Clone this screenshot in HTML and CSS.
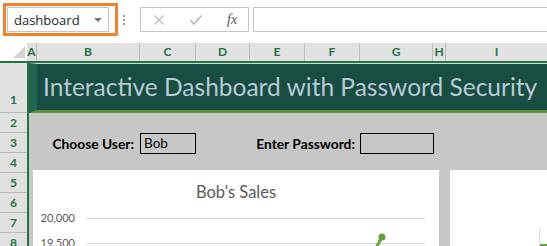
FILE: index.html
```html
<!doctype html>
<html lang="en">
<head>
  <meta charset="UTF-8">
  <title>dashboard</title>
  <link rel="stylesheet" href="styles.css">
</head>
<body>
  <div class="ribbon">
    <div class="namebox">
      <div class="namefield">
        <span>dashboard</span>
        <span class="drop"></span>
      </div>
    </div>
    <div class="dots"><i></i><i></i><i></i></div>
    <div class="fxbtns">
      <svg class="fxicon" width="12" height="12" viewBox="0 0 12 12">
        <path d="M1.5 1.5 L10.5 10.5 M10.5 1.5 L1.5 10.5" stroke="#bcbcbc" stroke-width="1.3" fill="none"/>
      </svg>
      <svg class="fxicon" width="14" height="12" viewBox="0 0 14 12">
        <path d="M1.5 6.5 L5 10 L12.5 1.5" stroke="#bcbcbc" stroke-width="1.8" fill="none"/>
      </svg>
      <span class="fx">fx</span>
    </div>
    <div class="formula"></div>
  </div>

  <div class="colhdr">
    <div class="corner"><span class="tri"></span></div>
    <div class="col w-a">A</div>
    <div class="col w-b">B</div>
    <div class="col w-c">C</div>
    <div class="col w-d">D</div>
    <div class="col w-e">E</div>
    <div class="col w-f">F</div>
    <div class="col w-g">G</div>
    <div class="col w-h">H</div>
    <div class="col w-i">I</div>
  </div>

  <div class="sheet">
    <div class="rowhdr">
      <div class="row r1">1</div>
      <div class="row">2</div>
      <div class="row">3</div>
      <div class="row">4</div>
      <div class="row">5</div>
      <div class="row">6</div>
      <div class="row">7</div>
      <div class="row">8</div>
    </div>

    <div class="content">
      <div class="band">Interactive Dashboard with Password Security</div>
      <div class="spacer"></div>
      <div class="inputs">
        <div class="lbl lbl-user">Choose User:</div>
        <div class="cellbox">Bob</div>
        <div class="lbl lbl-pass">Enter Password:</div>
        <div class="cellbox pass"></div>
      </div>

      <div class="charts">
        <div class="chart main-chart">
          <div class="chart-title">Bob's Sales</div>
          <svg class="plot" width="406" height="60" viewBox="0 0 406 60">
            <line x1="53" y1="18.5" x2="392" y2="18.5" stroke="#d9d9d9" stroke-width="1"/>
            <line x1="53" y1="43.5" x2="392" y2="43.5" stroke="#d9d9d9" stroke-width="1"/>
            <text x="42" y="22" text-anchor="end" class="axis">20,000</text>
            <text x="42" y="47" text-anchor="end" class="axis">19,500</text>
            <polyline points="349,37 343,48" fill="none" stroke="#62a438" stroke-width="3"/>
            <circle cx="349" cy="37" r="3.6" fill="#62a438"/>
          </svg>
        </div>
        <div class="chart side-chart">
          <svg width="97" height="76" viewBox="0 0 97 76">
            <line x1="89.5" y1="59" x2="89.5" y2="76" stroke="#d9d9d9"/>
            <line x1="90" y1="75" x2="97" y2="75" stroke="#62a438" stroke-width="2"/>
          </svg>
        </div>
      </div>
    </div>
  </div>
</body>
</html>
```
FILE: styles.css
```css
*{
  box-sizing: border-box;
}
body{
  margin: 0;
  width: 547px;
  height: 246px;
  overflow: hidden;
  background: #ffffff;
  font-family: Lato, "Open Sans", sans-serif;
}

/* formula bar */
.ribbon{
  height: 43px;
  display: flex;
  align-items: flex-start;
  padding-top: 3px;
}
.namebox{
  margin-left: 3px;
  width: 115px;
  height: 33px;
  border: 3px solid #f4812a;
  padding: 1px 6px 1px 1px;
}
.namefield{
  height: 25px;
  border: 1px solid #c6c6c6;
  display: flex;
  align-items: center;
  justify-content: space-between;
  padding: 0 6px 0 6px;
  font-family: "Open Sans", sans-serif;
  font-size: 13px;
  color: #262626;
}
.drop{
  width: 0;
  height: 0;
  border-left: 4px solid transparent;
  border-right: 4px solid transparent;
  border-top: 4px solid #777;
  margin-top: 1px;
}
.dots{
  width: 12px;
  height: 33px;
  display: flex;
  flex-direction: column;
  align-items: center;
  justify-content: center;
  gap: 2px;
}
.dots i{
  width: 2px;
  height: 2px;
  background: #9a9a9a;
}
.fxbtns{
  margin-top: 4px;
  margin-left: 10px;
  width: 109px;
  height: 25px;
  border: 1px solid #c6c6c6;
  display: flex;
  align-items: center;
  padding: 0 0 0 12px;
}
.fxicon{
  display: block;
  margin-right: 24px;
}
.fx{
  color: #555;
  font-family: "Liberation Serif", serif;
  font-style: italic;
  font-size: 14px;
}
.formula{
  margin-top: 4px;
  margin-left: 4px;
  flex: 1;
  height: 25px;
  border: 1px solid #c6c6c6;
  border-right: none;
}

/* headers */
.colhdr{
  height: 20px;
  display: flex;
  background: #e1e1e1;
  border-bottom: 2px solid #217346;
}
.corner{
  width: 27px;
  background: #ffffff;
  position: relative;
}
.tri{
  position: absolute;
  right: 2px;
  bottom: 3px;
  width: 0;
  height: 0;
  border-left: 12px solid transparent;
  border-bottom: 12px solid #d3d3d3;
}
.col{
  border-right: 1px solid #bdbdbd;
  text-align: center;
  font-weight: bold;
  font-size: 12px;
  line-height: 18px;
  color: #217346;
}
.w-a{ width: 10px; }
.w-b{ width: 103px; }
.w-c{ width: 56px; }
.w-d{ width: 54px; }
.w-e{ width: 55px; }
.w-f{ width: 55px; }
.w-g{ width: 73px; }
.w-h{ width: 13px; }
.w-i{ flex: 1; border-right: none; }

.sheet{
  display: flex;
  height: 183px;
}
.rowhdr{
  width: 27px;
  background: #e1e1e1;
}
.row{
  height: 20px;
  border-bottom: 1px solid #b9b9b9;
  display: flex;
  align-items: flex-end;
  justify-content: center;
  padding-bottom: 2px;
  font-weight: bold;
  font-size: 12px;
  color: #217346;
}
.row.r1{
  height: 50px;
  padding-bottom: 5px;
}

/* sheet content */
.content{
  flex: 1;
  background: #c7c7c7;
  border-left: 2px solid #217346;
  overflow: hidden;
}
.band{
  height: 50px;
  border-top: 1px solid #d3ddd8;
  border-left: 8px solid #216551;
  border-bottom: 3px solid #5e8f3a;
  background: #184d41;
  color: #b7c9d6;
  font-size: 24.5px;
  line-height: 46px;
  padding-left: 6px;
  white-space: nowrap;
}
.spacer{
  height: 20px;
}
.inputs{
  height: 20px;
  display: grid;
  grid-template-columns: 111px 56px 164px 74px;
  align-items: center;
  font-weight: bold;
  font-size: 13.8px;
  color: #000;
}
.lbl{
  text-align: right;
  padding-right: 6px;
  white-space: nowrap;
}
.lbl-pass{
  padding-right: 5px;
}
.cellbox{
  height: 21px;
  border: 1px solid #000;
  font-weight: normal;
  font-size: 13.5px;
  line-height: 19px;
  padding-left: 3px;
}

.charts{
  margin-top: 17px;
  padding-left: 4px;
  display: flex;
  gap: 11px;
}
.chart{
  background: #ffffff;
  height: 80px;
}
.main-chart{
  width: 406px;
}
.side-chart{
  flex: 1;
}
.chart-title{
  text-align: center;
  color: #595959;
  font-size: 16.5px;
  padding-top: 12px;
  line-height: 20px;
}
.plot{
  display: block;
  margin-top: -2px;
}
.axis{
  font-family: Lato, sans-serif;
  font-size: 11px;
  fill: #595959;
}
```
